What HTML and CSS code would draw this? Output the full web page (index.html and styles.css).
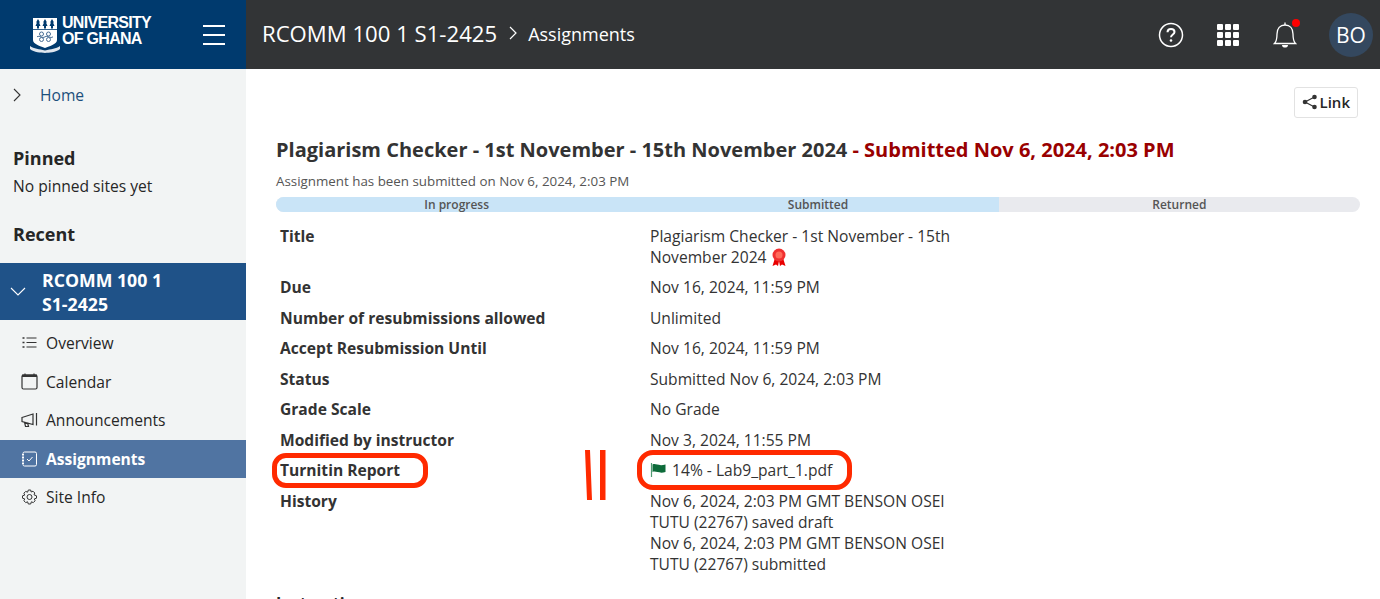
FILE: index.html
```html
<!DOCTYPE html>
<html lang="en">
<head>
    <meta charset="UTF-8">
    <meta name="viewport" content="width=device-width, initial-scale=1.0">
    <title>Assignments</title>
    <link rel="stylesheet" href="styles.css">
</head>
<body>
    <div class="topbar">
        <div class="brand">
            <div class="logo">
                <svg class="crest" width="30" height="36" viewBox="0 0 30 36">
                    <path d="M3 1H27V23C27 27 20 29 15 31C10 29 3 27 3 23Z" fill="#fff"/>
                    <path d="M3 12.500H27" stroke="#003a6e" stroke-width="0.800"/>
                    <path d="M8 2L10 5.500H9L10.500 9H9V11.500H7V9H5.500L7 5.500H6ZM15 2L17 5.500H16L17.500 9H16V11.500H14V9H12.500L14 5.500H13ZM22 2L24 5.500H23L24.500 9H23V11.500H21V9H19.500L21 5.500H20Z" fill="#003a6e"/>
                    <g fill="none" stroke="#4a6f96" stroke-width="1">
                        <circle cx="11.500" cy="17" r="2"/><circle cx="18.500" cy="17" r="2"/>
                        <circle cx="11.500" cy="22.500" r="2"/><circle cx="18.500" cy="22.500" r="2"/>
                        <path d="M7 19.800C10 18 12 22 15 19.800C18 18 20 22 23 19.800"/>
                    </g>
                    <path d="M0 29C4 32 9 32 15 33.500C21 32 26 32 30 29V32C26 35.500 19 35.500 15 36C11 35.500 4 35.500 0 32Z" fill="#dfe6ee"/>
                </svg>
                <div class="logo-text">UNIVERSITY<br>OF GHANA</div>
            </div>
            <div class="burger"><span></span><span></span><span></span></div>
        </div>
        <div class="crumbs">
            <span class="site-name">RCOMM 100 1 S1-2425</span>
            <svg width="10" height="14" viewBox="0 0 10 14"><path d="M2 1L8 7L2 13" fill="none" stroke="#fff" stroke-width="1.200"/></svg>
            <span class="tool-name">Assignments</span>
        </div>
        <div class="top-icons">
            <svg width="26" height="26" viewBox="0 0 26 26">
                <circle cx="13" cy="13" r="11.500" fill="none" stroke="#fff" stroke-width="1.500"/>
                <path d="M9.500 10.300C9.500 8.300 11 7 13 7C15 7 16.500 8.300 16.500 10C16.500 12.500 13 12.500 13 15.300" fill="none" stroke="#fff" stroke-width="2"/>
                <circle cx="13" cy="18.500" r="1.300" fill="#fff"/>
            </svg>
            <div class="apps">
                <span></span><span></span><span></span>
                <span></span><span></span><span></span>
                <span></span><span></span><span></span>
            </div>
            <div class="bell">
                <svg width="24" height="26" viewBox="0 0 24 26">
                    <path d="M1.500 21.500C3.500 19.500 4 18 4 12C4 6.500 7 3 12 3C17 3 20 6.500 20 12C20 18 20.500 19.500 22.500 21.500Z" fill="none" stroke="#fff" stroke-width="1.300"/>
                    <path d="M12 0.500V3" stroke="#fff" stroke-width="1.300"/>
                    <path d="M9 23H15C15 25 13.500 25.500 12 25.500C10.500 25.500 9 25 9 23Z" fill="#fff"/>
                </svg>
                <span class="bell-dot"></span>
            </div>
            <div class="avatar">BO</div>
        </div>
    </div>

    <div class="layout">
        <div class="sidebar">
            <div class="home-row">
                <svg width="10" height="14" viewBox="0 0 10 14"><path d="M2 1L8 7L2 13" fill="none" stroke="#333" stroke-width="1.100"/></svg>
                <a href="#">Home</a>
            </div>
            <h4 class="side-title pinned">Pinned</h4>
            <p class="side-note">No pinned sites yet</p>
            <h4 class="side-title recent">Recent</h4>
            <div class="site-row">
                <svg width="16" height="10" viewBox="0 0 16 10"><path d="M1 1L8 8L15 1" fill="none" stroke="#fff" stroke-width="1.100"/></svg>
                <span>RCOMM 100 1<br>S1-2425</span>
            </div>
            <ul class="tool-list">
                <li>
                    <svg width="17" height="16" viewBox="0 0 17 16"><path d="M5.500 3H15.500M5.500 7.500H15.500M5.500 12H15.500" stroke="#333" stroke-width="1"/><path d="M1.500 3H3.500M1.500 7.500H3.500M1.500 12H3.500" stroke="#333" stroke-width="1.400"/></svg>
                    Overview
                </li>
                <li>
                    <svg width="17" height="17" viewBox="0 0 17 17"><rect x="1" y="2" width="15" height="14" rx="1.500" fill="none" stroke="#333" stroke-width="1.200"/><rect x="1" y="1.500" width="15" height="2.500" fill="#333"/><path d="M4 0.500V2M13 0.500V2" stroke="#333" stroke-width="1.200"/></svg>
                    Calendar
                </li>
                <li>
                    <svg width="17" height="16" viewBox="0 0 17 16"><path d="M1 5.500L12 2V12.500L1 9.500Z M12 2V12.500 M15.500 1V13.500 M3.500 10L4.500 14.500H7.500L6.500 10.500" fill="none" stroke="#333" stroke-width="1.200"/></svg>
                    Announcements
                </li>
                <li class="active">
                    <svg width="17" height="16" viewBox="0 0 17 16"><rect x="2" y="1" width="13.500" height="14" rx="1.500" fill="none" stroke="#fff" stroke-width="1"/><path d="M6 8L8 10L11.500 6" fill="none" stroke="#fff" stroke-width="1"/><path d="M1 3.500H3M1 6.500H3M1 9.500H3M1 12.500H3" stroke="#fff" stroke-width="1"/></svg>
                    Assignments
                </li>
                <li>
                    <svg width="17" height="16" viewBox="0 0 16 16"><circle cx="8" cy="8" r="2.500" fill="none" stroke="#333" stroke-width="1"/><path d="M6.800 1H9.200L9.700 3L11.500 2.200L13.300 4L12.500 5.800L15 6.800V9.200L12.800 9.900L13.600 11.800L11.800 13.600L9.900 12.800L9.200 15H6.800L6.100 12.800L4.200 13.600L2.400 11.800L3.200 9.900L1 9.200V6.800L3.200 6.100L2.400 4.200L4.200 2.400L6.100 3.200Z" fill="none" stroke="#333" stroke-width="1"/></svg>
                    Site Info
                </li>
            </ul>
        </div>

        <div class="content">
            <div class="link-row">
                <button class="link-btn">
                    <svg width="16" height="16" viewBox="0 0 16 16"><path d="M12.500 3L3 8L12.500 13" fill="none" stroke="#333" stroke-width="1.200"/><circle cx="12.500" cy="3" r="2.300" fill="#333"/><circle cx="3" cy="8" r="2.300" fill="#333"/><circle cx="12.500" cy="13" r="2.300" fill="#333"/></svg>
                    Link
                </button>
            </div>
            <h3 class="assign-title">Plagiarism Checker - 1st November - 15th November 2024 <span class="submitted">- Submitted Nov 6, 2024, 2:03 PM</span></h3>
            <p class="assign-note">Assignment has been submitted on Nov 6, 2024, 2:03 PM</p>
            <div class="progress">
                <div class="step done">In progress</div>
                <div class="step done">Submitted</div>
                <div class="step">Returned</div>
            </div>
            <div class="details">
                <div class="label">Title</div>
                <div class="value">Plagiarism Checker - 1st November - 15th November 2024
                    <svg class="award" width="16" height="19" viewBox="0 0 16 19"><path d="M4 10L1.500 18L5 16.500L7 18L8 13L9 18L11 16.500L14.500 18L12 10Z" fill="#e90000"/><circle cx="8" cy="7" r="6.500" fill="#f03030"/><circle cx="8" cy="7" r="3.500" fill="#ff6a5a"/></svg>
                </div>
                <div class="label">Due</div>
                <div class="value">Nov 16, 2024, 11:59 PM</div>
                <div class="label">Number of resubmissions allowed</div>
                <div class="value">Unlimited</div>
                <div class="label">Accept Resubmission Until</div>
                <div class="value">Nov 16, 2024, 11:59 PM</div>
                <div class="label">Status</div>
                <div class="value">Submitted Nov 6, 2024, 2:03 PM</div>
                <div class="label">Grade Scale</div>
                <div class="value">No Grade</div>
                <div class="label">Modified by instructor</div>
                <div class="value">Nov 3, 2024, 11:55 PM</div>
                <div class="label">Turnitin Report</div>
                <div class="value">
                    <svg class="flag" width="16" height="14" viewBox="0 0 16 14"><path d="M1.500 0V14" stroke="#4f9a72" stroke-width="1.200"/><path d="M2.500 1.500C6 0 8 3.500 15.500 1.500V9C9 11 6 7.500 2.500 9Z" fill="#0d6b3a"/></svg>
                    14% - Lab9_part_1.pdf
                </div>
                <div class="label">History</div>
                <div class="value">Nov 6, 2024, 2:03 PM GMT BENSON OSEI TUTU (22767) saved draft<br>Nov 6, 2024, 2:03 PM GMT BENSON OSEI TUTU (22767) submitted</div>
            </div>
            <h4 class="instructions">Instructions</h4>

            <!-- red marks drawn over the screenshot -->
            <div class="mark mark-left"></div>
            <div class="mark mark-right"></div>
            <svg class="equals" width="26" height="54" viewBox="0 0 26 54"><path d="M3 1L5 51H10L8 1Z M18 1V51H23.500V1Z" fill="#ff2a00"/></svg>
        </div>
    </div>
</body>
</html>
```

FILE: styles.css
```css
html, body {
    height: 599px;
    overflow: hidden;
}
body {
    font-family: "Open Sans", sans-serif;
    font-size: 15.6px;
    color: #262626;
    margin: 0;
    background: #fff;
}
.topbar {
    display: flex;
    height: 69px;
    background: #323436;
    color: #fff;
}
.brand {
    width: 246px;
    flex-shrink: 0;
    background: #003a6e;
    display: flex;
    align-items: center;
    padding: 0 21px 0 30px;
    box-sizing: border-box;
    justify-content: space-between;
}
.logo {
    display: flex;
    align-items: center;
    gap: 2px;
}
.logo-text {
    font-family: "Liberation Sans", Arial, sans-serif;
    font-weight: bold;
    font-size: 16px;
    line-height: 16px;
    margin-top: -7px;
    letter-spacing: -0.7px;
}
.burger {
    display: flex;
    flex-direction: column;
    gap: 7px;
    width: 22px;
}
.burger span {
    height: 2px;
    background: #fff;
}
.crumbs {
    flex: 1;
    display: flex;
    align-items: center;
    padding: 0 0 3px 16px;
    gap: 10.5px;
}
.site-name {
    font-size: 22.15px;
}
.tool-name {
    font-size: 18px;
    margin-top: 2px;
}
.top-icons {
    display: flex;
    align-items: center;
    padding-right: 7px;
}
.apps {
    display: grid;
    grid-template-columns: repeat(3, 6px);
    gap: 2px;
    margin: 0 34px 0 33px;
}
.apps span {
    width: 6px;
    height: 6px;
    border-radius: 1px;
    background: #fff;
}
.bell {
    position: relative;
    display: flex;
    margin-right: 32px;
}
.bell-dot {
    position: absolute;
    top: -3px;
    right: -3px;
    width: 8px;
    height: 8px;
    border-radius: 50%;
    background: #f00;
}
.avatar {
    width: 44px;
    height: 44px;
    border-radius: 50%;
    background: #34485f;
    display: flex;
    align-items: center;
    justify-content: center;
    font-size: 21px;
}
.layout {
    display: flex;
    height: 530px;
}
.sidebar {
    width: 246px;
    flex-shrink: 0;
    background: #f2f4f4;
}
.home-row {
    display: flex;
    align-items: center;
    height: 52px;
    padding-left: 12px;
    gap: 18px;
}
.home-row a {
    color: #1c4f7c;
    text-decoration: none;
}
.side-title {
    font-size: 18px;
    font-weight: 700;
    margin: 0;
    padding-left: 13px;
    line-height: 24px;
}
.pinned {
    margin-top: 25px;
}
.recent {
    margin-top: 25px;
}
.side-note {
    margin: 5px 0 0;
    padding-left: 13px;
    line-height: 22px;
}
.site-row {
    margin-top: 17px;
    height: 57px;
    background: #1f5288;
    color: #fff;
    font-size: 17.7px;
    font-weight: 700;
    line-height: 24px;
    display: flex;
    align-items: center;
    padding-left: 10px;
    gap: 16px;
}
.tool-list {
    list-style: none;
    margin: 4px 0 0;
    padding: 0;
}
.tool-list li {
    display: flex;
    align-items: center;
    height: 38.5px;
    padding-left: 21px;
    gap: 8px;
}
.tool-list li.active {
    background: #5074a2;
    color: #fff;
    font-weight: 700;
}
.content {
    flex: 1;
    position: relative;
    padding: 0 20px 0 30px;
}
.link-row {
    display: flex;
    justify-content: flex-end;
    padding: 18px 2px 0 0;
}
.link-btn {
    display: flex;
    align-items: center;
    gap: 2px;
    height: 31px;
    padding: 0 7px 2px;
    background: #fff;
    border: 1px solid #e2e2e2;
    border-radius: 3px;
    font-family: "Open Sans", sans-serif;
    font-size: 15px;
    font-weight: 600;
    color: #262626;
}
.assign-title {
    font-size: 20px;
    font-weight: 700;
    color: #333;
    margin: 17px 0 0;
    line-height: 30px;
}
.submitted {
    color: #990000;
}
.assign-note {
    font-size: 13.35px;
    color: #555;
    margin: 7px 0 0;
    line-height: 18px;
}
.progress {
    display: flex;
    height: 15px;
    border-radius: 8px;
    overflow: hidden;
    margin-top: 7px;
    background: #e9eaee;
}
.step {
    flex: 1;
    text-align: center;
    font-size: 12px;
    font-weight: 600;
    line-height: 15px;
    color: #555;
}
.step.done {
    background: #c9e4f7;
}
.details {
    display: grid;
    grid-template-columns: 370px 310px;
    padding-left: 4px;
    line-height: 21px;
    margin-top: 9px;
}
.label, .value {
    padding: 4.75px 0;
}
.label {
    font-weight: 700;
    color: #333;
}
.value {
    color: #333;
}
.award {
    vertical-align: -4px;
}
.flag {
    vertical-align: -1px;
    margin-right: 2px;
}
.instructions {
    font-size: 16px;
    margin: 12px 0 0;
    line-height: 22px;
}
.mark {
    position: absolute;
    border: 5px solid #ff2a00;
    border-radius: 14px;
    box-sizing: border-box;
}
.mark-left {
    left: 26px;
    top: 384px;
    width: 156px;
    height: 35px;
}
.mark-right {
    left: 391px;
    top: 381px;
    width: 215px;
    height: 40px;
    border-radius: 16px;
}
.equals {
    position: absolute;
    left: 336px;
    top: 380px;
}
```
